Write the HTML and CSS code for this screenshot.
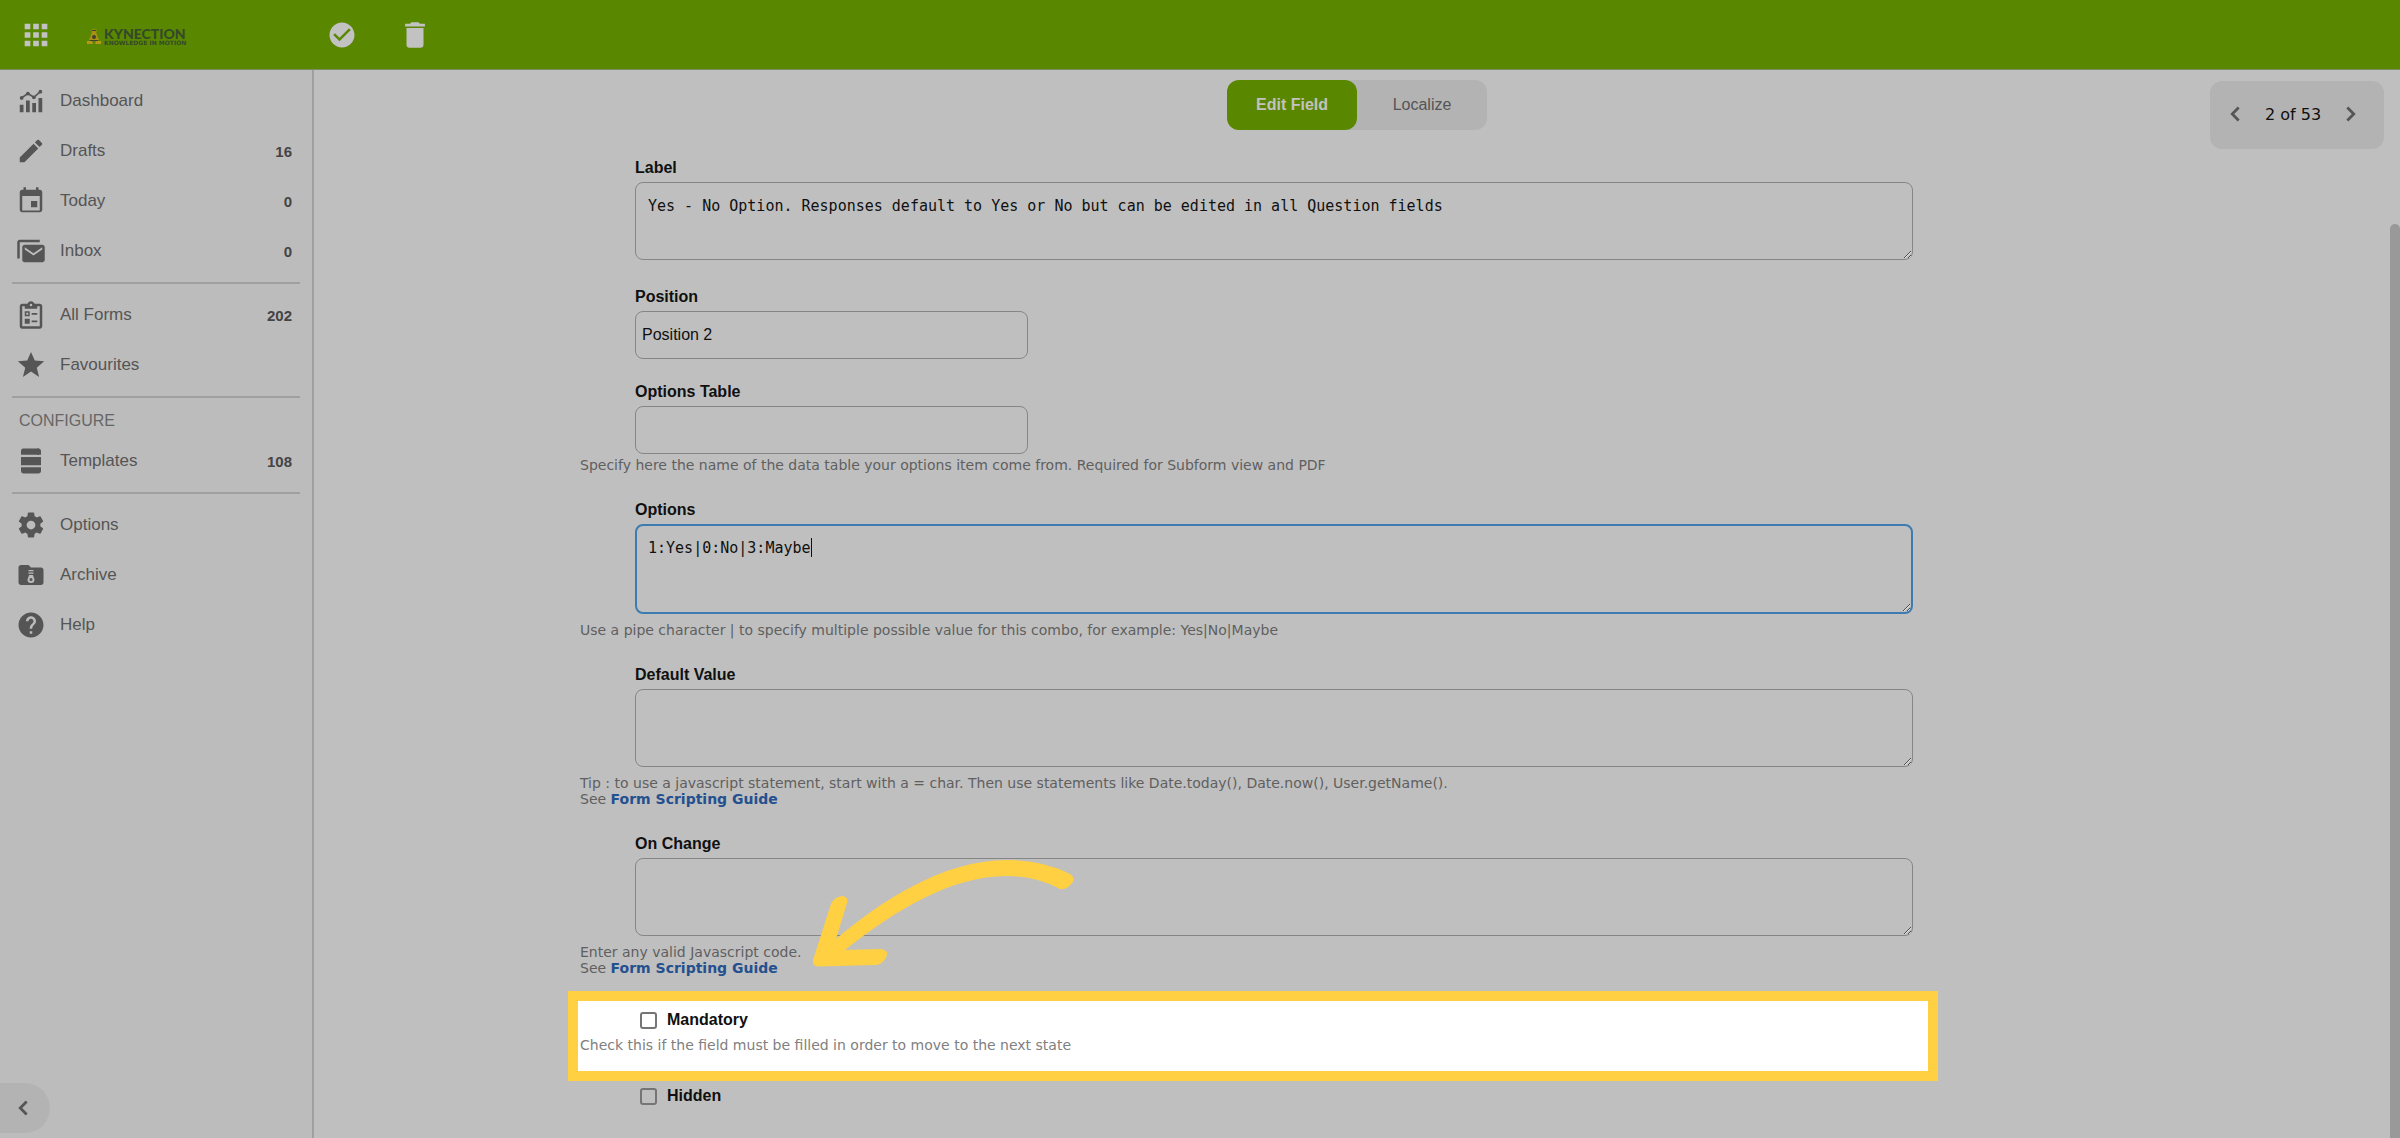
FILE: index.html
```html
<!DOCTYPE html>
<html lang="en">
  <head>
    <meta charset="utf-8">
    <title>Edit Field</title>
    <link rel="stylesheet" href="styles.css">
  </head>
  <body>
    <header class="topbar">
      <div class="brand">
        <button class="icon-button" aria-label="Apps">
          <svg class="icon-large" viewBox="0 0 24 24"><path d="M4 4h4v4H4zM10 4h4v4h-4zM16 4h4v4h-4zM4 10h4v4H4zM10 10h4v4h-4zM16 10h4v4h-4zM4 16h4v4H4zM10 16h4v4h-4zM16 16h4v4h-4z"/></svg>
        </button>
        <a class="logo" href="#">
          <svg class="logo-mark" viewBox="0 0 14 18">
            <path fill="#a89018" d="M4 2l3-1 3 1-1 2 1 3 2 5H2l2-5 1-3z"/>
            <path fill="#b8961a" d="M0 13h5l1 3H0zM8 16l1-3h5v3z"/>
            <circle cx="7" cy="9" r="2" fill="#42402c"/>
            <path fill="#42402c" d="M3 12h8v1H3zM5 2h4v1H5z"/>
          </svg>
          <span class="logo-text">
            <span class="logo-name">KYNECTION</span>
            <span class="logo-tag">KNOWLEDGE IN MOTION</span>
          </span>
        </a>
      </div>
      <div class="actions">
        <button class="icon-button" aria-label="Save">
          <svg class="icon" viewBox="0 0 24 24"><path d="M12 2C6.500 2 2 6.500 2 12s4.500 10 10 10 10-4.500 10-10S17.500 2 12 2zm-2 15l-5-5 1.400-1.400L10 14.200l7.600-7.600L19 8z"/></svg>
        </button>
        <button class="icon-button" aria-label="Delete">
          <svg class="icon-large" viewBox="0 0 24 24"><path d="M6 19c0 1.100.9 2 2 2h8c1.100 0 2-.9 2-2V7H6zM19 4h-3.500l-1-1h-5l-1 1H5v2h14z"/></svg>
        </button>
      </div>
    </header>

    <div class="layout">
      <nav class="sidebar">
        <a class="nav-item" href="#">
          <svg class="icon" viewBox="0 0 24 24"><path d="M3 15h3v6H3zM8 11.500h3V21H8zM13 13.500h3V21h-3zM18 9.500h3V21h-3z"/><path fill="none" stroke="currentColor" stroke-width="1.300" d="M4.500 9.500l5-3.500 4.800 3L19.500 4.500"/><circle cx="4.500" cy="9.500" r="1.500"/><circle cx="9.500" cy="6" r="1.500"/><circle cx="14.300" cy="9" r="1.500"/><circle cx="19.500" cy="4.500" r="1.500"/></svg>
          <span>Dashboard</span>
        </a>
        <a class="nav-item" href="#">
          <svg class="icon" viewBox="0 0 24 24"><path d="M3 17.250V21h3.750L17.810 9.940l-3.750-3.750zM20.710 7.040a1 1 0 0 0 0-1.410l-2.340-2.340a1 1 0 0 0-1.410 0l-1.830 1.830 3.750 3.750z"/></svg>
          <span>Drafts</span><b class="count">16</b>
        </a>
        <a class="nav-item" href="#">
          <svg class="icon" viewBox="0 0 24 24"><path d="M17 12h-5v5h5zM16 1v2H8V1H6v2H5c-1.100 0-2 .9-2 2v14c0 1.100.9 2 2 2h14c1.100 0 2-.9 2-2V5c0-1.100-.9-2-2-2h-1V1zm3 18.500H5V8h14z"/></svg>
          <span>Today</span><b class="count">0</b>
        </a>
        <a class="nav-item" href="#">
          <svg class="icon" viewBox="0 0 24 24"><path d="M7 7h14c1.100 0 2 .9 2 2v10c0 1.100-.9 2-2 2H7c-1.100 0-2-.9-2-2V9c0-1.100.9-2 2-2zm7 8.500l7-4.700V9l-7 4.700L7 9v1.800z"/><path d="M3 18H1V5c0-1.100.9-2 2-2h16v2H3z"/></svg>
          <span>Inbox</span><b class="count">0</b>
        </a>
        <hr class="divider">
        <a class="nav-item" href="#">
          <svg class="icon" viewBox="0 0 24 24"><path d="M19 3h-4.200C14.400 1.800 13.300 1 12 1s-2.400.8-2.800 2H5c-1.100 0-2 .9-2 2v16c0 1.100.9 2 2 2h14c1.100 0 2-.9 2-2V5c0-1.100-.9-2-2-2zm-7 0a1 1 0 1 1 0 2 1 1 0 0 1 0-2zM5 5h2v2h10V5h2v16H5z" fill-rule="evenodd"/><path d="M7 9h4v4H7zm1.200 1.200v1.600h1.600v-1.600z" fill-rule="evenodd"/><path d="M12.500 10.300h4.500v1.500h-4.500zM7 15h4v4H7zM12.500 16.300h4.500v1.500h-4.500z"/></svg>
          <span>All Forms</span><b class="count">202</b>
        </a>
        <a class="nav-item" href="#">
          <svg class="icon" viewBox="0 0 24 24"><path d="M12 17.270L18.500 21.500l-1.900-7.400L22.500 9l-7.500-.6L12 1.500 9 8.400 1.500 9l5.900 5.100-1.900 7.400z"/></svg>
          <span>Favourites</span>
        </a>
        <hr class="divider">
        <h2 class="nav-heading">CONFIGURE</h2>
        <a class="nav-item" href="#">
          <svg class="icon" viewBox="0 0 24 24"><path d="M2 7V4c0-1.100.9-2 2-2h16v5zM2 8.700h20v6.600H2z" transform="translate(2.400 0) scale(.8 1)"/><path d="M18 2c1.100 0 2 .9 2 2v3h-3V2zM4 17h16v3c0 1.100-.9 2-2 2H6c-1.100 0-2-.9-2-2z"/></svg>
          <span>Templates</span><b class="count">108</b>
        </a>
        <hr class="divider">
        <a class="nav-item" href="#">
          <svg class="icon" viewBox="0 0 24 24"><path d="M12 15.500A3.500 3.500 0 0 1 8.500 12 3.500 3.500 0 0 1 12 8.500a3.500 3.500 0 0 1 3.500 3.500 3.500 3.500 0 0 1-3.500 3.500m7.430-2.530c.04-.32.07-.64.07-.97s-.03-.66-.07-1l2.110-1.630c.19-.15.24-.42.12-.64l-2-3.460c-.12-.22-.39-.31-.61-.22l-2.490 1c-.52-.39-1.060-.73-1.690-.98l-.37-2.650A.506.506 0 0 0 14 2h-4c-.25 0-.46.18-.5.420l-.37 2.650c-.63.25-1.170.59-1.690.98l-2.490-1c-.22-.09-.49 0-.61.22l-2 3.460c-.13.22-.07.49.12.640L4.570 11c-.04.34-.07.67-.07 1s.03.65.07.97l-2.110 1.660c-.19.15-.25.42-.12.640l2 3.460c.12.22.39.3.61.22l2.490-1.010c.52.4 1.060.74 1.690.99l.37 2.650c.04.24.25.42.5.420h4c.25 0 .46-.18.5-.42l.37-2.650c.63-.26 1.170-.59 1.690-.99l2.490 1.010c.22.08.49 0 .61-.22l2-3.460c.12-.22.07-.49-.12-.64z"/></svg>
          <span>Options</span>
        </a>
        <a class="nav-item" href="#">
          <svg class="icon" viewBox="0 0 24 24"><path d="M20 6h-8l-2-2H4c-1.100 0-2 .9-2 2v12c0 1.100.9 2 2 2h16c1.100 0 2-.9 2-2V8c0-1.100-.9-2-2-2z"/><path fill="#bcbcbc" d="M10 8h4v1h-4zM10 10h4v1h-4zM10.500 12h3l1.300 3.500a2.800 2.800 0 1 1-5.600 0z"/><circle cx="12" cy="15.500" r="1.200"/></svg>
          <span>Archive</span>
        </a>
        <a class="nav-item" href="#">
          <svg class="icon" viewBox="0 0 24 24"><path d="M12 2C6.480 2 2 6.480 2 12s4.480 10 10 10 10-4.480 10-10S17.520 2 12 2zm1 17h-2v-2h2zm2.070-7.750l-.9.920C13.450 12.900 13 13.500 13 15h-2v-.5c0-1.100.45-2.100 1.170-2.830l1.240-1.260c.37-.36.59-.86.59-1.410 0-1.100-.9-2-2-2s-2 .9-2 2H8c0-2.210 1.790-4 4-4s4 1.790 4 4c0 .88-.36 1.680-.93 2.250z"/></svg>
          <span>Help</span>
        </a>
        <button class="collapse" aria-label="Collapse menu">
          <svg class="chevron" viewBox="0 0 24 24"><path d="M16 5l-7 7 7 7"/></svg>
        </button>
      </nav>

      <main class="content">
        <div class="tabs">
          <button class="tab tab-active">Edit Field</button>
          <button class="tab">Localize</button>
        </div>

        <div class="pager">
          <button class="icon-button" aria-label="Previous"><svg class="chevron" viewBox="0 0 24 24"><path d="M16 5l-7 7 7 7"/></svg></button>
          <span>2 of 53</span>
          <button class="icon-button" aria-label="Next"><svg class="chevron" viewBox="0 0 24 24"><path d="M8 5l7 7-7 7"/></svg></button>
        </div>

        <form class="form">
          <div class="field">
            <label for="label">Label</label>
            <textarea id="label" spellcheck="false">Yes - No Option. Responses default to Yes or No but can be edited in all Question fields</textarea>
          </div>

          <div class="field">
            <label for="position">Position</label>
            <input class="text-input" id="position" type="text" value="Position 2">
          </div>

          <div class="field field-close">
            <label for="options-table">Options Table</label>
            <input class="text-input" id="options-table" type="text">
            <p class="hint hint-close">Specify here the name of the data table your options item come from. Required for Subform view and PDF</p>
          </div>

          <div class="field">
            <label for="options">Options</label>
            <textarea class="tall focused" id="options" spellcheck="false">1:Yes|0:No|3:Maybe</textarea>
            <span class="caret"></span>
            <p class="hint">Use a pipe character | to specify multiple possible value for this combo, for example: Yes|No|Maybe</p>
          </div>

          <div class="field">
            <label for="default-value">Default Value</label>
            <textarea id="default-value"></textarea>
            <p class="hint">Tip : to use a javascript statement, start with a = char. Then use statements like Date.today(), Date.now(), User.getName().<br>See <a href="#">Form Scripting Guide</a></p>
          </div>

          <div class="field">
            <label for="on-change">On Change</label>
            <textarea id="on-change"></textarea>
            <p class="hint">Enter any valid Javascript code.<br>See <a href="#">Form Scripting Guide</a></p>
            <svg class="arrow" viewBox="0 0 270 114">
              <path d="M26 83C70 46 132 4 197 4Q233 4 260 18Q266 22 262 27Q257 34 250 33Q226 20 197 20C141 20 86 54 35 94L71 93Q78 94 77 99Q74 108 66 109L8 110.500Q2 110 3 104L21 48Q24 41 32 40Q39 41 37 47Z"/>
            </svg>
          </div>

          <div class="highlight">
            <div class="check">
              <input type="checkbox" id="mandatory">
              <label for="mandatory">Mandatory</label>
            </div>
            <p class="hint">Check this if the field must be filled in order to move to the next state</p>
          </div>

          <div class="check check-last">
            <input type="checkbox" id="hidden">
            <label for="hidden">Hidden</label>
          </div>
        </form>
        <div class="scroll-thumb"></div>
      </main>
    </div>
  </body>
</html>
```
FILE: styles.css
```css
* {
  box-sizing: border-box;
}
body {
  margin: 0;
  height: 100vh;
  display: flex;
  flex-direction: column;
  overflow: hidden;
  background-color: #bfbfbf;
  font-family: "Liberation Sans", Arial, sans-serif;
  font-size: 16px;
  color: #101010;
}
button {
  border: none;
  padding: 0;
  background: none;
  font: inherit;
  color: inherit;
  cursor: pointer;
}
svg {
  display: block;
  fill: currentColor;
}
.icon {
  width: 30px;
  height: 30px;
}
.icon-large {
  width: 34px;
  height: 34px;
}
.chevron {
  width: 22px;
  height: 22px;
  fill: none;
  stroke: #555;
  stroke-width: 3;
}

/* top bar */
.topbar {
  height: 70px;
  flex: none;
  display: flex;
  align-items: center;
  background-color: #5a8700;
  border-bottom: 1px solid #7c8a66;
  color: #c2c2c2;
}
.brand {
  width: 314px;
  padding-left: 19px;
  display: flex;
  align-items: center;
  gap: 34px;
}
.logo {
  display: flex;
  align-items: center;
  gap: 3px;
  padding-top: 4px;
  color: #34492a;
  text-decoration: none;
}
.logo-mark {
  width: 14px;
  height: 18px;
}
.logo-text {
  display: flex;
  flex-direction: column;
}
.logo-name {
  font-family: Lato, sans-serif;
  font-size: 14px;
  font-weight: 900;
  line-height: 12px;
}
.logo-tag {
  font-family: "DejaVu Sans", sans-serif;
  font-size: 6px;
  font-weight: bold;
  line-height: 6px;
}
.actions {
  display: flex;
  align-items: center;
  gap: 41px;
  padding-left: 13px;
}

.layout {
  flex: 1;
  display: flex;
  min-height: 0;
}

/* left menu */
.sidebar {
  position: relative;
  width: 314px;
  flex: none;
  padding: 6px 12px 0;
  background-color: #bcbcbc;
  border-right: 2px solid #a0a0a0;
}
.nav-item {
  display: flex;
  align-items: center;
  height: 50px;
  padding: 0 8px 0 4px;
  gap: 14px;
  color: #555;
  font-size: 17px;
  text-decoration: none;
}
.count {
  margin-left: auto;
  color: #444;
  font-size: 15px;
}
.divider {
  height: 2px;
  margin: 6px 0;
  border: none;
  background-color: #a0a0a0;
}
.nav-heading {
  margin: 0;
  padding: 6px 7px 4px;
  font-size: 16px;
  font-weight: normal;
  line-height: 22px;
  color: #666;
}
.collapse {
  position: absolute;
  left: 0;
  bottom: 5px;
  width: 50px;
  height: 50px;
  padding-left: 12px;
  border-radius: 0 25px 25px 0;
  background-color: #b3b3b3;
}

/* field editor */
.content {
  position: relative;
  flex: 1;
  padding: 10px 12px 0;
}
.tabs {
  width: 260px;
  margin: 0 auto;
  display: flex;
  border-radius: 12px;
  background-color: #b3b3b3;
}
.tab {
  flex: 1;
  height: 50px;
  border-radius: 12px;
  color: #555;
}
.tab-active {
  background-color: #5a8700;
  color: #c2c2c2;
  font-weight: bold;
}
.pager {
  position: absolute;
  top: 11px;
  right: 16px;
  width: 174px;
  height: 68px;
  padding: 0 22px 2px 14px;
  display: flex;
  align-items: center;
  justify-content: space-between;
  border-radius: 12px;
  background-color: #b3b3b3;
  font-family: "DejaVu Sans", Verdana, sans-serif;
}
.form {
  max-width: 1554px;
  margin: 28px auto 0;
}
.field {
  position: relative;
  margin-top: 27px;
  padding-left: 55px;
}
.field-close {
  margin-top: 23px;
}
label {
  display: block;
  font-weight: bold;
  line-height: 20px;
}
textarea,
.text-input {
  display: block;
  margin-top: 4px;
  border: 1px solid #868686;
  border-radius: 8px;
  background: none;
  color: #101010;
  outline: none;
}
textarea {
  width: 100%;
  max-width: 1278px;
  height: 78px;
  padding: 13px 12px;
  font-family: "DejaVu Sans Mono", monospace;
  font-size: 15px;
  line-height: 20px;
}
.text-input {
  width: 393px;
  height: 48px;
  padding: 0 6px;
  font-family: inherit;
  font-size: 16px;
}
.tall {
  height: 90px;
}
.focused {
  padding: 12px 11px;
  border: 2px solid #3d7cb0;
}
.caret {
  position: absolute;
  left: 231px;
  top: 38px;
  width: 1px;
  height: 19px;
  background-color: #101010;
}
.hint {
  margin: 8px 0 0 -55px;
  font-family: "DejaVu Sans", Verdana, sans-serif;
  font-size: 14px;
  line-height: 16px;
  color: #606060;
}
.hint-close {
  margin-top: 3px;
}
.hint a {
  color: #24508f;
  font-weight: bold;
  text-decoration: none;
}
.highlight {
  max-width: 1370px;
  margin: 15px 0 0 -12px;
  padding: 9px 2px 18px;
  border: 10px solid #ffd042;
  background-color: #fff;
}
.highlight .hint {
  margin: 7px 0 0;
  color: #808080;
}
.check {
  display: flex;
  align-items: center;
  gap: 10px;
  padding-left: 60px;
}
.highlight .check {
  padding-left: 60px;
}
.check input {
  appearance: none;
  width: 17px;
  height: 17px;
  margin: 0;
  border: 2px solid #757575;
  border-radius: 3px;
}
.check-last {
  margin-top: 5px;
}
.arrow {
  position: absolute;
  left: 230px;
  top: 22px;
  width: 270px;
  height: 114px;
  fill: #ffd042;
}
.scroll-thumb {
  position: absolute;
  top: 154px;
  right: 0;
  bottom: 0;
  width: 10px;
  border-radius: 5px 5px 0 0;
  background-color: #999;
}
```
